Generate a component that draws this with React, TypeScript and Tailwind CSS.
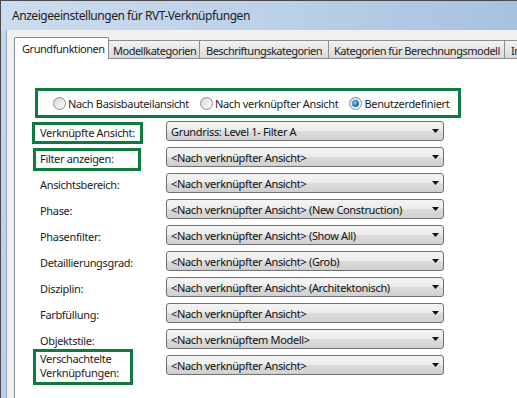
import React from "react";

const GREEN = "border-[#0f7a3d]";

function Radio({ checked, label }: { checked?: boolean; label: string }) {
  return (
    <div className="flex items-center gap-[2px] whitespace-nowrap">
      <div className="w-[13px] h-[13px] shrink-0 rounded-full border border-[#8d8d8d] bg-gradient-to-br from-[#d4d4d4] via-[#ececec] to-[#fefefe] flex items-center justify-center">
        {checked && (
          <div className="w-[7px] h-[7px] rounded-full bg-[radial-gradient(circle_at_40%_40%,#8fd0ff_0%,#2a7fd0_45%,#0d3f86_100%)]" />
        )}
      </div>
      <span className="text-[11px] leading-[16px] pt-[1px] text-[#1c1c1c]">{label}</span>
    </div>
  );
}

function Dropdown({ text }: { text: string }) {
  return (
    <div className="w-[278px] h-[20px] shrink-0 rounded-[3px] border border-[#707070] bg-[linear-gradient(#f4f4f4_0%,#ececec_48%,#dcdcdc_52%,#d0d0d0_100%)] flex items-center justify-between pl-[4px] pr-[4px]">
      <span className="text-[11px] leading-[18px] pt-[2px] text-[#111] whitespace-nowrap">{text}</span>
      <svg width="7" height="4" viewBox="0 0 7 4">
        <path d="M0 0H7L3.5 4Z" fill="#111" />
      </svg>
    </div>
  );
}

function PlainLabel({ text }: { text: string }) {
  return (
    <div className="w-[151px] shrink-0 pl-[25px] text-[11px] leading-[20px] pt-[2px] text-[#1c1c1c] whitespace-nowrap">
      {text}
    </div>
  );
}

const rows: { label: string; value: string }[] = [
  { label: "Ansichtsbereich:", value: "<Nach verknüpfter Ansicht>" },
  { label: "Phase:", value: "<Nach verknüpfter Ansicht> (New Construction)" },
  { label: "Phasenfilter:", value: "<Nach verknüpfter Ansicht> (Show All)" },
  { label: "Detaillierungsgrad:", value: "<Nach verknüpfter Ansicht> (Grob)" },
  { label: "Disziplin:", value: "<Nach verknüpfter Ansicht> (Architektonisch)" },
  { label: "Farbfüllung:", value: "<Nach verknüpfter Ansicht>" },
  { label: "Objektstile:", value: "<Nach verknüpftem Modell>" },
];

const TAB =
  "h-[18px] shrink-0 -ml-px border-x border-t border-[#898c95] bg-gradient-to-b from-[#f3f3f3] to-[#dadada] pt-[2px] whitespace-nowrap tracking-[-0.5px] overflow-hidden";

export default function App() {
  return (
    <div
      className="w-[517px] h-[398px] overflow-hidden flex flex-col bg-[#bcd2ec] border-t border-l border-[#4a4a4a] text-[#1c1c1c] tracking-[-0.33px]"
      style={{ fontFamily: '"Noto Sans", "Open Sans", sans-serif' }}
    >
      <div className="h-[29px] shrink-0 flex items-center pl-[11px] text-[12px] tracking-[-0.45px] bg-gradient-to-r from-[#cddcee] via-[#bdd1ea] to-[#a7c1df]">
        Anzeigeeinstellungen für RVT-Verknüpfungen
      </div>
      <div className="flex-1 flex min-h-0">
        <div className="w-[5px] shrink-0 bg-gradient-to-b from-[#c3d6ec] to-[#b9d1ea]" />
        <div className="flex-1 flex flex-col border-l border-[#97a9c0] bg-[#f0f0f0] pl-[7px] pt-[7px] min-w-0">
          <div className="h-[21px] shrink-0 flex items-end text-[11px]">
            <div className="relative z-10 h-[22px] -mb-px w-[95px] shrink-0 bg-white border-x border-t border-[#898c95] rounded-t-[2px] pl-[7px] pt-[3px] whitespace-nowrap tracking-[-0.45px]">
              Grundfunktionen
            </div>
            <div className={`${TAB} w-[92px] pl-[4px]`}>Modellkategorien</div>
            <div className={`${TAB} w-[130px] pl-[6px]`}>Beschriftungskategorien</div>
            <div className={`${TAB} w-[177px] pl-[5px]`}>Kategorien für Berechnungsmodell</div>
            <div className={`${TAB} w-[40px] pl-[6px]`}>In</div>
          </div>
          <div className="flex-1 bg-white border-l border-t border-[#898c95] flex flex-col">
            <div className={`ml-[20px] mt-[29px] w-[426px] h-[30px] shrink-0 border-[3px] ${GREEN} flex items-center pl-[15px] gap-[11px]`}>
              <Radio label="Nach Basisbauteilansicht" />
              <Radio label="Nach verknüpfter Ansicht" />
              <Radio checked label="Benutzerdefiniert" />
            </div>
            <div className="mt-[3px] flex flex-col gap-[6px]">
              <div className="h-[20px] flex items-start">
                <div className="w-[151px] shrink-0">
                  <div className={`ml-[17px] mt-[1px] h-[22px] w-[111px] border-[3px] ${GREEN} pl-[5px] text-[11px] leading-[16px] whitespace-nowrap`}>
                    Verknüpfte Ansicht:
                  </div>
                </div>
                <Dropdown text="Grundriss: Level 1- Filter A" />
              </div>
              <div className="h-[20px] flex items-start">
                <div className="w-[151px] shrink-0">
                  <div className={`ml-[18px] mt-[1px] h-[23px] w-[108px] border-[3px] ${GREEN} pl-[4px] text-[11px] leading-[16px] whitespace-nowrap`}>
                    Filter anzeigen:
                  </div>
                </div>
                <Dropdown text="<Nach verknüpfter Ansicht>" />
              </div>
              {rows.map((r) => (
                <div key={r.label} className="h-[20px] flex items-start">
                  <PlainLabel text={r.label} />
                  <Dropdown text={r.value} />
                </div>
              ))}
              <div className="h-[20px] flex items-start">
                <div className="w-[151px] shrink-0">
                  <div className={`ml-[18px] -mt-[6px] h-[36px] w-[100px] border-[3px] ${GREEN} pl-[4px] text-[11px] leading-[14px] whitespace-nowrap flex flex-col`}>
                    <span>Verschachtelte</span>
                    <span>Verknüpfungen:</span>
                  </div>
                </div>
                <Dropdown text="<Nach verknüpfter Ansicht>" />
              </div>
            </div>
          </div>
        </div>
      </div>
    </div>
  );
}
